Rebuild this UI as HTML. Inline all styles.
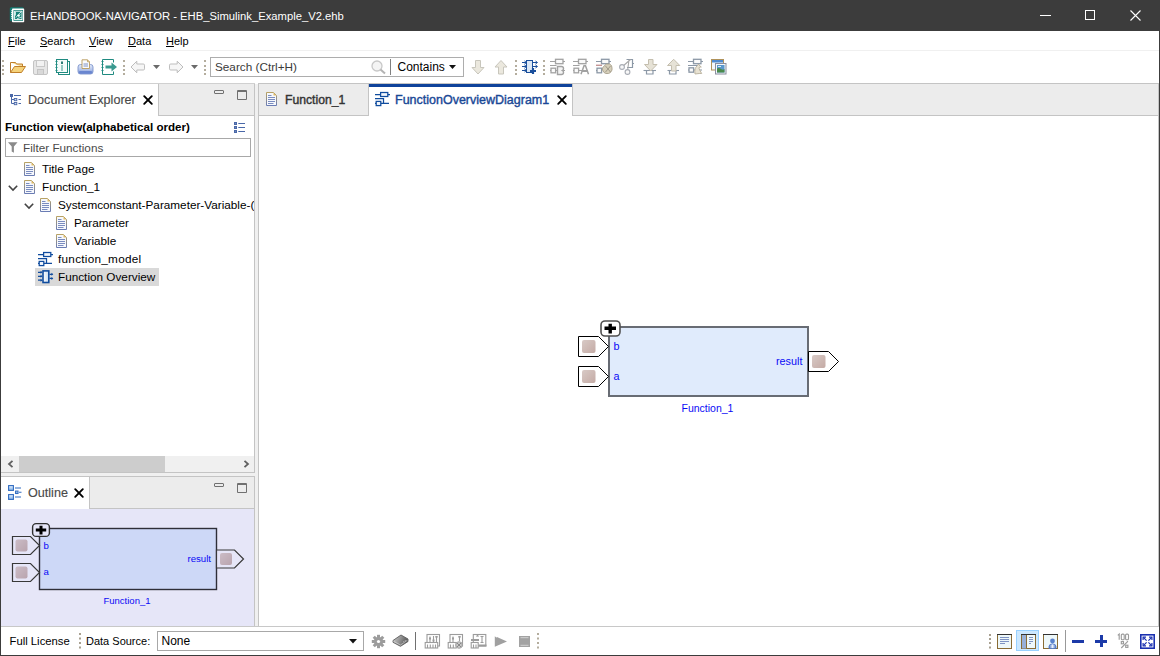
<!DOCTYPE html>
<html><head><meta charset="utf-8">
<style>
*{box-sizing:border-box;margin:0;padding:0}
html,body{width:1160px;height:656px;overflow:hidden;background:#fff;font-family:"Liberation Sans",sans-serif;font-size:12px;color:#000}
.a{position:absolute}
.t{position:absolute;white-space:nowrap;line-height:1}
svg{position:absolute;overflow:visible}
</style></head><body>
<!-- window frame -->
<div class="a" style="left:0;top:0;width:1160px;height:656px;background:#3c3c3c"></div>
<!-- title bar -->
<div class="a" style="left:1px;top:1px;width:1158px;height:30px;background:#3c3c3c"></div>
<div class="t" style="left:30px;top:11px;font-size:11.25px;color:#fff">EHANDBOOK-NAVIGATOR - EHB_Simulink_Example_V2.ehb</div>
<!-- client -->
<div class="a" style="left:1px;top:31px;width:1158px;height:624px;background:#fff"></div>

<!-- title icon -->
<svg style="left:9px;top:7px" width="16" height="16" viewBox="0 0 16 16">
<rect x="0.8" y="0.3" width="14" height="14" rx="1.5" fill="#137a72"/>
<rect x="3" y="1.6" width="12.2" height="13.6" rx="0.8" fill="#fff"/>
<rect x="4.5" y="3" width="9.5" height="10.8" fill="#157f76"/>
<rect x="5.6" y="4.2" width="7.4" height="8.4" fill="none" stroke="#fff" stroke-width="0.9"/>
<path d="M6.5 5v3.5M7 10.5q2-3 5-5.5M8 11.8q2-1 4.5-1.5M8.5 8.5l2 0.6 0.6-2" stroke="#e8fffc" stroke-width="0.8" fill="none"/>
<circle cx="9.6" cy="8.6" r="1.1" fill="#fff"/>
<path d="M2.2 3.5l1.6 1-1.6 1 1.6 1-1.6 1 1.6 1-1.6 1 1.6 1-1.6 1" fill="none" stroke="#fff" stroke-width="0.9"/>
</svg>
<!-- window controls -->
<div class="a" style="left:1040px;top:15px;width:11px;height:1px;background:#fff"></div>
<div class="a" style="left:1085px;top:10px;width:10px;height:10px;border:1px solid #fff"></div>
<svg style="left:1130px;top:10px" width="11" height="11" viewBox="0 0 11 11"><path d="M0.5 0.5L10.5 10.5M10.5 0.5L0.5 10.5" stroke="#fff" stroke-width="1.1"/></svg>

<!-- menu -->
<div class="t" style="left:8px;top:35.7px;font-size:11px"><u style="text-underline-offset:0.5px">F</u>ile</div>
<div class="t" style="left:40px;top:35.7px;font-size:11px"><u style="text-underline-offset:0.5px">S</u>earch</div>
<div class="t" style="left:89px;top:35.7px;font-size:11px"><u style="text-underline-offset:0.5px">V</u>iew</div>
<div class="t" style="left:128px;top:35.7px;font-size:11px"><u style="text-underline-offset:0.5px">D</u>ata</div>
<div class="t" style="left:166px;top:35.7px;font-size:11px"><u style="text-underline-offset:0.5px">H</u>elp</div>
<div class="a" style="left:1px;top:50px;width:1158px;height:1px;background:#f0f0f0"></div>
<!-- toolbar -->
<svg style="left:2px;top:59px" width="2" height="17"><rect x="0" y="1" width="2" height="2" fill="#b4ad9e"/><rect x="0" y="6" width="2" height="2" fill="#b4ad9e"/><rect x="0" y="10" width="2" height="2" fill="#b4ad9e"/><rect x="0" y="14" width="2" height="2" fill="#b4ad9e"/></svg>
<svg style="left:10px;top:61px" width="16" height="13" viewBox="0 0 16 13"><path d="M0.5 1.5h5l1 1.5h6v3" fill="#f6dc96" stroke="#c07f2a" stroke-width="1"/><path d="M0.5 1.5v10h11l4-6h-11l-4 6" fill="#f5d27a" stroke="#c07f2a" stroke-width="1"/></svg>
<svg style="left:33px;top:60px" width="15" height="15" viewBox="0 0 15 15"><rect x="0.5" y="0.5" width="14" height="14" rx="1.5" fill="#e6e6e6" stroke="#c4c4c4"/><rect x="3.5" y="0.5" width="8" height="6" fill="#f2f2f2" stroke="#c8c8c8"/><rect x="4.5" y="9.5" width="6" height="5" fill="#d8d8d8" stroke="#c4c4c4"/></svg>
<svg style="left:55px;top:59px" width="15" height="16" viewBox="0 0 15 16"><rect x="3.5" y="2.5" width="11" height="13" fill="#fff" stroke="#1f8a80"/><rect x="1.5" y="0.5" width="11" height="13" fill="#f4fbfa" stroke="#1f8a80"/><path d="M0.5 2.5h2M0.5 5.5h2M0.5 8.5h2M0.5 11.5h2" stroke="#1f8a80"/><rect x="6" y="2.5" width="2" height="2.5" fill="#2d7d77"/><path d="M6 7h2M6 9h2M6 11h2" stroke="#3a9a90"/></svg>
<svg style="left:77px;top:59px" width="17" height="16" viewBox="0 0 17 16"><defs><linearGradient id="prg" x1="0" y1="0" x2="0" y2="1"><stop offset="0" stop-color="#e4ecfa"/><stop offset="0.55" stop-color="#b4c4ea"/><stop offset="1" stop-color="#6f8ad4"/></linearGradient></defs><path d="M1 8q0-2.5 2.5-2.5h10q2.5 0 2.5 2.5v4.5q0 2.5-2.5 2.5h-10q-2.5 0-2.5-2.5z" fill="url(#prg)" stroke="#7d94cc" stroke-width="0.9"/><rect x="2" y="12" width="13" height="2.5" rx="1" fill="#6a86d0"/><path d="M5 9.5V0.8h5.5l2 2v6.7z" fill="#fafbfd" stroke="#b89a5c" stroke-width="0.9"/><path d="M10.5 0.8v2h2" fill="#e8d6a8" stroke="#b89a5c" stroke-width="0.8"/><path d="M6.5 5h4.5M6.5 7h4.5" stroke="#6f86c0" stroke-width="0.9"/></svg>
<svg style="left:101px;top:59px" width="17" height="16" viewBox="0 0 17 16"><path d="M12.5 3.5v-3h-11v15h11v-3" fill="none" stroke="#1f8a80"/><path d="M0.5 2.5h2M0.5 5.5h2M0.5 8.5h2M0.5 11.5h2" stroke="#1f8a80"/><path d="M4.5 6.5h6v-3l5.5 4.5-5.5 4.5v-3h-6z" fill="#3a9a90"/></svg>
<svg style="left:123px;top:59px" width="2" height="17"><rect x="0" y="1" width="2" height="2" fill="#b4ad9e"/><rect x="0" y="6" width="2" height="2" fill="#b4ad9e"/><rect x="0" y="10" width="2" height="2" fill="#b4ad9e"/><rect x="0" y="14" width="2" height="2" fill="#b4ad9e"/></svg>
<svg style="left:130px;top:60px" width="16" height="14" viewBox="0 0 16 14"><path d="M1 7L6.8 1.2V4H13.3Q14.5 4 14.5 5.2V8.8Q14.5 10 13.3 10H6.8V12.8Z" fill="#f6f6f6" stroke="#bdbdbd" stroke-linejoin="round"/></svg>
<svg style="left:153px;top:65px" width="7" height="4" viewBox="0 0 7 4"><path d="M0 0h7l-3.5 4z" fill="#6a6a6a"/></svg>
<svg style="left:168px;top:60px" width="16" height="14" viewBox="0 0 16 14"><path d="M15 7L9.2 1.2V4H2.7Q1.5 4 1.5 5.2V8.8Q1.5 10 2.7 10H9.2V12.8Z" fill="#f6f6f6" stroke="#bdbdbd" stroke-linejoin="round"/></svg>
<svg style="left:191px;top:65px" width="7" height="4" viewBox="0 0 7 4"><path d="M0 0h7l-3.5 4z" fill="#6a6a6a"/></svg>
<svg style="left:204px;top:59px" width="2" height="17"><rect x="0" y="1" width="2" height="2" fill="#b4ad9e"/><rect x="0" y="6" width="2" height="2" fill="#b4ad9e"/><rect x="0" y="10" width="2" height="2" fill="#b4ad9e"/><rect x="0" y="14" width="2" height="2" fill="#b4ad9e"/></svg>
<div class="a" style="left:210px;top:57px;width:254px;height:20px;border:1px solid #adadad;background:#fff"></div>
<div class="t" style="left:215px;top:61px;font-size:11.75px;color:#3a3a3a">Search (Ctrl+H)</div>
<svg style="left:371px;top:60px" width="16" height="15" viewBox="0 0 16 15"><circle cx="6" cy="6" r="5" fill="#f4f4f4" stroke="#c8c8c8" stroke-width="1.3"/><path d="M9.5 9.5l4.5 4" stroke="#b4b4b4" stroke-width="2"/></svg>
<div class="a" style="left:390px;top:59px;width:1px;height:16px;background:#808080"></div>
<div class="t" style="left:397.5px;top:60.8px;font-size:12px">Contains</div>
<svg style="left:449px;top:65px" width="7" height="4" viewBox="0 0 7 4"><path d="M0 0h7l-3.5 4z" fill="#111"/></svg>
<svg style="left:471px;top:59px" width="14" height="16" viewBox="0 0 14 16"><path d="M4.5 1.5h5v7h3.5l-6 6.5-6-6.5h3.5z" fill="#ebe8de" stroke="#c8c6bc" stroke-linejoin="round"/></svg>
<svg style="left:494px;top:59px" width="14" height="16" viewBox="0 0 14 16"><path d="M4.5 15h5v-7h3.5l-6-6.5-6 6.5h3.5z" fill="#ebe8de" stroke="#c8c6bc" stroke-linejoin="round"/></svg>
<svg style="left:515px;top:59px" width="2" height="17"><rect x="0" y="1" width="2" height="2" fill="#b4ad9e"/><rect x="0" y="6" width="2" height="2" fill="#b4ad9e"/><rect x="0" y="10" width="2" height="2" fill="#b4ad9e"/><rect x="0" y="14" width="2" height="2" fill="#b4ad9e"/></svg>
<svg style="left:521px;top:59px" width="17" height="16" viewBox="0 0 17 16"><rect x="5.5" y="1.5" width="6" height="12" fill="#dde9f6" stroke="#1a4f9c"/><path d="M1 3.5h4M1 7.5h4M1 11.5h4M12 3.5h4M12 7.5h4" stroke="#1a4f9c"/><path d="M3.5 2l2 1.5-2 1.5M3.5 6l2 1.5-2 1.5M3.5 10l2 1.5-2 1.5M14.5 2l2 1.5-2 1.5M14.5 6l2 1.5-2 1.5" fill="none" stroke="#1a4f9c"/><path d="M9 12h6M12 9v6" stroke="#1a4f9c" stroke-width="2.2"/></svg>
<svg style="left:543px;top:59px" width="2" height="17"><rect x="0" y="1" width="2" height="2" fill="#b4ad9e"/><rect x="0" y="6" width="2" height="2" fill="#b4ad9e"/><rect x="0" y="10" width="2" height="2" fill="#b4ad9e"/><rect x="0" y="14" width="2" height="2" fill="#b4ad9e"/></svg>
<svg style="left:550px;top:58px" width="17" height="17" viewBox="0 0 17 17"><path d="M0 3.5H15M0 7.5H6.5M0 12.5H15" stroke="#a2a2a2" stroke-width="1.1"/><rect x="5.5" y="1.3" width="7.5" height="4.4" fill="#fafafa" stroke="#a2a2a2" stroke-width="1.3"/><rect x="1" y="10.2" width="4.6" height="4.6" fill="#fafafa" stroke="#a2a2a2" stroke-width="1.3"/><path d="M7.5 8.5h4q2 0 2 2v0.5q0 1-1 1.5 1 .5 1 1.5v.5q0 2-2 2h-4z" fill="#f4f4f4" stroke="#a2a2a2" stroke-width="1.4"/></svg>
<svg style="left:573px;top:58px" width="17" height="17" viewBox="0 0 17 17"><path d="M0 3.5H15M0 7.5H6.5M0 12.5H15" stroke="#a2a2a2" stroke-width="1.1"/><rect x="5.5" y="1.3" width="7.5" height="4.4" fill="#fafafa" stroke="#a2a2a2" stroke-width="1.3"/><rect x="1" y="10.2" width="4.6" height="4.6" fill="#fafafa" stroke="#a2a2a2" stroke-width="1.3"/><path d="M8 16.3l3-8.5h1.5l3 8.5M9.5 13.3h4.5" fill="none" stroke="#a2a2a2" stroke-width="1.5"/></svg>
<svg style="left:596px;top:58px" width="17" height="17" viewBox="0 0 17 17"><path d="M0 3.5H15M0 12.5H5" stroke="#8c98a6" stroke-width="1.1"/><rect x="5.5" y="1.3" width="7.5" height="4.4" fill="#fafafa" stroke="#8c98a6" stroke-width="1.3"/><rect x="1" y="10.2" width="4.6" height="4.6" fill="#fafafa" stroke="#8c98a6" stroke-width="1.3"/><path d="M0 7.3H6" stroke="#c49494" stroke-width="1.4"/><path d="M8.5 7.5l2-1.5h3l2 1.5 .5 2.5v2l-1.5 2.5-2 1h-2.5l-2-1-1.5-2.5v-2z" fill="#d6cfba" stroke="#a8a08c" stroke-width="0.9"/><path d="M9.5 8l5 6M14.5 8l-5 6" stroke="#9a9484" stroke-width="0.9"/></svg>
<svg style="left:619px;top:58px" width="16" height="17" viewBox="0 0 16 17"><path d="M7.5 1.5H13.5V9.5H8" fill="none" stroke="#8c98a6" stroke-width="1.2"/><path d="M0 9.5h15" stroke="#8c98a6" stroke-width="0"/><path d="M3.5 8.5L11.5 1.5M8.5 13L10 2" stroke="#a8a8a8" stroke-width="1.1"/><path d="M13 5.5h2" stroke="#8c98a6"/><circle cx="3" cy="9" r="2.4" fill="#f8f8f8" stroke="#a8acb4" stroke-width="1.1"/><circle cx="8.5" cy="14" r="2.4" fill="#f8f8f8" stroke="#a8acb4" stroke-width="1.1"/></svg>
<svg style="left:643px;top:58px" width="15" height="17" viewBox="0 0 15 17"><path d="M0.5 12.5H13" stroke="#8c98a6" stroke-width="1.1"/><path d="M3.5 12.5v3.5h6.5v-3.5" fill="none" stroke="#8c98a6" stroke-width="1.2"/><path d="M5.5 1.5h4.5v5h4l-6.3 6.5-6.2-6.5h4z" fill="#e6e2d6" stroke="#c4beae" stroke-linejoin="round"/></svg>
<svg style="left:667px;top:58px" width="15" height="17" viewBox="0 0 15 17"><path d="M0.5 12.5H12" stroke="#8c98a6" stroke-width="1.1"/><path d="M2.5 12.5v3.5h6.5v-3.5" fill="none" stroke="#8c98a6" stroke-width="1.2"/><path d="M4.5 13h4.5v-5.5h3.8l-6.1-6.2-6.2 6.2h4z" fill="#e6e2d6" stroke="#c4beae" stroke-linejoin="round"/></svg>
<svg style="left:688px;top:58px" width="16" height="17" viewBox="0 0 16 17"><path d="M0 3.5H15M0 7.5H12M0 12H14" stroke="#8c98a6" stroke-width="1.1"/><rect x="5.5" y="1.3" width="7.5" height="4.4" fill="#fafafa" stroke="#8c98a6" stroke-width="1.3"/><rect x="1" y="9.8" width="4.6" height="4.4" fill="#fafafa" stroke="#8c98a6" stroke-width="1.3"/><path d="M7 16q-1-6 2.5-8.5l1-1.5 1 1.5 1.8 1.5h-1.6q-1.5 .5 0 3l2 3.5h-2.5z" fill="#e8e2d2" stroke="#b8b09c" stroke-width="0.9"/></svg>
<svg style="left:710px;top:58px" width="17" height="17" viewBox="0 0 17 17"><rect x="1.5" y="1.5" width="12" height="10.5" fill="#f4f8fc" stroke="#b0925a"/><rect x="2" y="2" width="11" height="2.5" fill="#4f8ad0"/><rect x="5.5" y="5.5" width="10.5" height="10.5" fill="#f4f8fc" stroke="#8a8e9e"/><rect x="7" y="7" width="7.5" height="7.5" fill="#5b98cc"/><path d="M7 14.5v-4q2-1 4 .5t3.5 0v3.5z" fill="#4a8a4c"/><path d="M8 8.5h3" stroke="#fff" stroke-width="0.8"/></svg>
<!-- toolbar bottom line -->
<div class="a" style="left:1px;top:83px;width:1158px;height:1px;background:#d0d0d0"></div>

<!-- left panel area bg -->
<div class="a" style="left:1px;top:84px;width:257px;height:542px;background:#f0f0f0"></div>
<!-- doc explorer panel -->
<div class="a" style="left:1px;top:84px;width:254px;height:389px;background:#fff;border-right:1px solid #c4c4c4;border-bottom:1px solid #c4c4c4"></div>
<div class="a" style="left:158px;top:84px;width:96px;height:32px;background:#ececec;border-left:1px solid #c4c4c4;border-bottom:1px solid #c4c4c4"></div>
<svg style="left:10px;top:94px" width="12" height="12" viewBox="0 0 12 12"><rect x="0" y="0" width="3" height="3" fill="#4a68a8"/><path d="M4 1.5h7M1.5 3v6.5M1.5 5.5h2.5M1.5 9.5h2.5M8.5 5.5h2.5M8.5 9.5h2.5" stroke="#4a68a8" fill="none"/><rect x="4.3" y="4.5" width="2.5" height="2.2" fill="#d8e0f0" stroke="#4a68a8" stroke-width="0.9"/><rect x="4.3" y="8.5" width="2.5" height="2.2" fill="#d8e0f0" stroke="#4a68a8" stroke-width="0.9"/></svg>
<div class="t" style="left:28px;top:94.4px;font-size:12.6px;color:#4a4a4a;-webkit-text-stroke:0.15px #4a4a4a">Document Explorer</div>
<svg style="left:143px;top:95px" width="10" height="10" viewBox="0 0 10 10"><path d="M1.2 1.2L8.8 8.8M8.8 1.2L1.2 8.8" stroke="#000" stroke-width="1.9" stroke-linecap="round"/></svg>
<div class="a" style="left:214px;top:90px;width:10px;height:4px;border:1px solid #707070;border-radius:1px"></div><div class="a" style="left:237px;top:90px;width:10px;height:10px;border:1px solid #707070;border-top-width:2px;border-radius:1px"></div>
<div class="t" style="left:5px;top:121.2px;font-size:11.6px;font-weight:bold">Function view(alphabetical order)</div>
<svg style="left:234px;top:122px" width="12" height="12" viewBox="0 0 12 12"><g fill="#4a68a8"><rect x="0" y="0" width="3" height="3"/><rect x="0" y="4" width="3" height="3"/><rect x="0" y="8" width="3" height="3"/></g><g fill="#b8c8e4"><rect x="1.2" y="1.2" width="0.6" height="0.6"/><rect x="1.2" y="5.2" width="0.6" height="0.6"/><rect x="1.2" y="9.2" width="0.6" height="0.6"/></g><path d="M4.3 1.5h6.7M4.3 5.5h6.7M4.3 9.5h6.7" stroke="#4a68a8" stroke-width="1.1"/></svg>
<div class="a" style="left:5px;top:138px;width:246px;height:19px;border:1px solid #a8a8a8;background:#fff"></div>
<svg style="left:7.5px;top:142px" width="10" height="11" viewBox="0 0 10 11"><path d="M0 0.3h9.5l-3.6 4.2v6.3l-2.2-1.4v-4.9z" fill="#8a8a8a"/></svg>
<div class="t" style="left:23px;top:142px;font-size:11.75px;color:#4a4a4a">Filter Functions</div>
<svg style="left:24px;top:162px" width="11" height="14" viewBox="0 0 11 14"><defs><linearGradient id="dg1" x1="0" y1="0" x2="0" y2="1"><stop offset="0" stop-color="#b8a264"/><stop offset="1" stop-color="#6a7cb4"/></linearGradient></defs><path d="M0.5 0.5H7.5L10.5 3.5V13.5H0.5Z" fill="#f6f8fc" stroke="url(#dg1)"/><path d="M7.5 0.8V3.5H10.2Z" fill="#e2ba62"/><path d="M2 3.5H5.5M2 5.5H9M2 7.5H9M2 9.5H9M2 11.5H7.5" stroke="#7a8cc0"/></svg>
<div class="t" style="left:42px;top:162.5px;font-size:11.75px">Title Page</div>
<svg style="left:7.5px;top:185px" width="10" height="6" viewBox="0 0 10 6"><path d="M0.8 0.8L5 5 9.2 0.8" fill="none" stroke="#444" stroke-width="1.6"/></svg>
<svg style="left:24px;top:180px" width="11" height="14" viewBox="0 0 11 14"><defs><linearGradient id="dg2" x1="0" y1="0" x2="0" y2="1"><stop offset="0" stop-color="#b8a264"/><stop offset="1" stop-color="#6a7cb4"/></linearGradient></defs><path d="M0.5 0.5H7.5L10.5 3.5V13.5H0.5Z" fill="#f6f8fc" stroke="url(#dg2)"/><path d="M7.5 0.8V3.5H10.2Z" fill="#e2ba62"/><path d="M2 3.5H5.5M2 5.5H9M2 7.5H9M2 9.5H9M2 11.5H7.5" stroke="#7a8cc0"/></svg>
<div class="t" style="left:42px;top:180.5px;font-size:11.75px">Function_1</div>
<svg style="left:23.5px;top:203px" width="10" height="6" viewBox="0 0 10 6"><path d="M0.8 0.8L5 5 9.2 0.8" fill="none" stroke="#444" stroke-width="1.6"/></svg>
<svg style="left:40px;top:198px" width="11" height="14" viewBox="0 0 11 14"><defs><linearGradient id="dg3" x1="0" y1="0" x2="0" y2="1"><stop offset="0" stop-color="#b8a264"/><stop offset="1" stop-color="#6a7cb4"/></linearGradient></defs><path d="M0.5 0.5H7.5L10.5 3.5V13.5H0.5Z" fill="#f6f8fc" stroke="url(#dg3)"/><path d="M7.5 0.8V3.5H10.2Z" fill="#e2ba62"/><path d="M2 3.5H5.5M2 5.5H9M2 7.5H9M2 9.5H9M2 11.5H7.5" stroke="#7a8cc0"/></svg>
<div class="a" style="left:58px;top:194px;width:196px;height:18px;overflow:hidden"><div class="t" style="left:0;top:4.5px;font-size:11.75px">Systemconstant-Parameter-Variable-(</div></div>
<svg style="left:56px;top:216px" width="11" height="14" viewBox="0 0 11 14"><defs><linearGradient id="dg4" x1="0" y1="0" x2="0" y2="1"><stop offset="0" stop-color="#b8a264"/><stop offset="1" stop-color="#6a7cb4"/></linearGradient></defs><path d="M0.5 0.5H7.5L10.5 3.5V13.5H0.5Z" fill="#f6f8fc" stroke="url(#dg4)"/><path d="M7.5 0.8V3.5H10.2Z" fill="#e2ba62"/><path d="M2 3.5H5.5M2 5.5H9M2 7.5H9M2 9.5H9M2 11.5H7.5" stroke="#7a8cc0"/></svg>
<div class="t" style="left:74px;top:216.5px;font-size:11.75px">Parameter</div>
<svg style="left:56px;top:234px" width="11" height="14" viewBox="0 0 11 14"><defs><linearGradient id="dg5" x1="0" y1="0" x2="0" y2="1"><stop offset="0" stop-color="#b8a264"/><stop offset="1" stop-color="#6a7cb4"/></linearGradient></defs><path d="M0.5 0.5H7.5L10.5 3.5V13.5H0.5Z" fill="#f6f8fc" stroke="url(#dg5)"/><path d="M7.5 0.8V3.5H10.2Z" fill="#e2ba62"/><path d="M2 3.5H5.5M2 5.5H9M2 7.5H9M2 9.5H9M2 11.5H7.5" stroke="#7a8cc0"/></svg>
<div class="t" style="left:74px;top:234.5px;font-size:11.75px">Variable</div>
<svg style="left:38px;top:251px" width="16" height="16" viewBox="0 0 16 16"><g fill="none" stroke="#104c9e" stroke-width="1.25"><path d="M0 3.5H15M0 7.6H8.5V12.4M0 12.4H14"/><rect x="5.6" y="1.5" width="7.2" height="4" fill="#f2f6fc"/><rect x="1.2" y="10.4" width="4.6" height="4.2" fill="#f2f6fc"/></g></svg>
<div class="t" style="left:58px;top:252.5px;font-size:11.75px;letter-spacing:0.27px">function_model</div>
<div class="a" style="left:35px;top:268px;width:124px;height:18px;background:#d9d9d9"></div>
<svg style="left:38px;top:269px" width="16" height="16" viewBox="0 0 16 16"><defs><linearGradient id="fog" x1="0" x2="1"><stop offset="0" stop-color="#ffffff"/><stop offset="1" stop-color="#c8dcf0"/></linearGradient></defs><rect x="5" y="1.9" width="5.8" height="11.6" fill="url(#fog)" stroke="#104c9e" stroke-width="1.6"/><path d="M0 3.3h3.5M0 7.3h3.5M0 11.2h3.5M11.5 5.3h3M11.5 9.4h3" stroke="#104c9e" stroke-width="1.3"/><path d="M2.6 1.8l1.9 1.5-1.9 1.5zM2.6 5.8l1.9 1.5-1.9 1.5zM2.6 9.7l1.9 1.5-1.9 1.5zM13.4 3.8l1.9 1.5-1.9 1.5zM13.4 7.9l1.9 1.5-1.9 1.5z" fill="#104c9e"/></svg>
<div class="t" style="left:58px;top:270.5px;font-size:11.75px">Function Overview</div>
<div class="a" style="left:255px;top:116px;width:0px;height:1px"></div>
<!-- h scrollbar -->
<div class="a" style="left:1px;top:456px;width:253px;height:16px;background:#f0f0f0"></div>
<div class="a" style="left:19px;top:456px;width:146px;height:16px;background:#cdcdcd"></div>
<svg style="left:7px;top:460px" width="7" height="8" viewBox="0 0 7 8"><path d="M5.5 0.8L2 4l3.5 3.2" fill="none" stroke="#606060" stroke-width="1.8"/></svg>
<svg style="left:243px;top:460px" width="7" height="8" viewBox="0 0 7 8"><path d="M1.5 0.8L5 4 1.5 7.2" fill="none" stroke="#606060" stroke-width="1.8"/></svg>
<!-- outline panel -->
<div class="a" style="left:1px;top:476px;width:254px;height:150px;background:#e6e6f8;border-right:1px solid #c4c4c4;border-top:1px solid #c4c4c4"></div>
<div class="a" style="left:1px;top:477px;width:88px;height:32px;background:#fff"></div>
<div class="a" style="left:89px;top:477px;width:165px;height:32px;background:#ececec;border-left:1px solid #c4c4c4;border-bottom:1px solid #c4c4c4"></div>
<svg style="left:8px;top:485px" width="14" height="15" viewBox="0 0 14 15"><defs><linearGradient id="olg" x1="0" y1="0" x2="0" y2="1"><stop offset="0" stop-color="#f0f6fe"/><stop offset="1" stop-color="#7aaee8"/></linearGradient></defs><g fill="url(#olg)" stroke="#2f6ac0" stroke-width="1.1"><rect x="0.6" y="0.6" width="4.8" height="4.8"/><rect x="0.6" y="9.6" width="4.8" height="4.8"/><rect x="7.6" y="6.1" width="2.4" height="2.4"/></g><path d="M7 3h6M11 7.3h2.5M7 12h6" stroke="#2f6ac0" stroke-width="1.1"/></svg>
<div class="t" style="left:28px;top:487.2px;font-size:12.6px;color:#4a4a4a;-webkit-text-stroke:0.15px #4a4a4a">Outline</div>
<svg style="left:74px;top:488px" width="10" height="10" viewBox="0 0 10 10"><path d="M1.2 1.2L8.8 8.8M8.8 1.2L1.2 8.8" stroke="#000" stroke-width="1.9" stroke-linecap="round"/></svg>
<div class="a" style="left:214px;top:483px;width:10px;height:4px;border:1px solid #707070;border-radius:1px"></div><div class="a" style="left:237px;top:483px;width:10px;height:10px;border:1px solid #707070;border-top-width:2px;border-radius:1px"></div>
<!-- editor -->
<div class="a" style="left:258px;top:83px;width:901px;height:543px;background:#fff;border-left:1px solid #c4c4c4;border-top:1px solid #c4c4c4;border-right:1px solid #c4c4c4"></div>
<div class="a" style="left:259px;top:84px;width:899px;height:32px;background:#ececec;border-bottom:1px solid #c4c4c4"></div>
<div class="a" style="left:259px;top:84px;width:110px;height:32px;background:#ececec;border-right:1px solid #c4c4c4;border-bottom:1px solid #c4c4c4"></div>
<svg style="left:266px;top:92px" width="11" height="14" viewBox="0 0 11 14"><defs><linearGradient id="dg6" x1="0" y1="0" x2="0" y2="1"><stop offset="0" stop-color="#b8a264"/><stop offset="1" stop-color="#6a7cb4"/></linearGradient></defs><path d="M0.5 0.5H7.5L10.5 3.5V13.5H0.5Z" fill="#f6f8fc" stroke="url(#dg6)"/><path d="M7.5 0.8V3.5H10.2Z" fill="#e2ba62"/><path d="M2 3.5H5.5M2 5.5H9M2 7.5H9M2 9.5H9M2 11.5H7.5" stroke="#7a8cc0"/></svg>
<div class="t" style="left:285px;top:94.4px;font-size:12.2px;color:#333;-webkit-text-stroke:0.4px #333">Function_1</div>
<div class="a" style="left:369px;top:84px;width:204px;height:32px;background:#fff;border-right:1px solid #c4c4c4"></div><div class="a" style="left:369px;top:116px;width:203px;height:1px;background:#fff"></div>
<div class="a" style="left:369px;top:84px;width:203px;height:3px;background:#0f429a"></div>
<svg style="left:375px;top:91px" width="16" height="16" viewBox="0 0 16 16"><g fill="none" stroke="#104c9e" stroke-width="1.25"><path d="M0 3.5H15M0 7.6H8.5V12.4M0 12.4H14"/><rect x="5.6" y="1.5" width="7.2" height="4" fill="#f2f6fc"/><rect x="1.2" y="10.4" width="4.6" height="4.2" fill="#f2f6fc"/></g></svg>
<div class="t" style="left:395px;top:94.4px;font-size:12.5px;color:#1a4896;-webkit-text-stroke:0.4px #1a4896">FunctionOverviewDiagram1</div>
<svg style="left:556.5px;top:95px" width="10" height="10" viewBox="0 0 10 10"><path d="M1.2 1.2L8.8 8.8M8.8 1.2L1.2 8.8" stroke="#000" stroke-width="1.9" stroke-linecap="round"/></svg>
<!-- main diagram -->
<svg style="left:0;top:0" width="1160" height="656" viewBox="0 0 1160 656">
<defs>
<linearGradient id="pg" x1="0" y1="0" x2="1" y2="1"><stop offset="0" stop-color="#d8cac6"/><stop offset="1" stop-color="#c4aaa4"/></linearGradient>
<filter id="bl" x="-30%" y="-30%" width="160%" height="160%"><feGaussianBlur stdDeviation="0.6"/></filter>
</defs>
<rect x="609" y="327" width="199" height="69" fill="#e0ebfc" stroke="#686c74" stroke-width="2"/>
<rect x="601" y="321" width="19" height="15" rx="4" fill="#fff" stroke="#505050" stroke-width="1.6"/>
<path d="M604.5 328.2h11.5M610.2 323.8v9.6" stroke="#000" stroke-width="3.4"/>
<path d="M578.5 336.5H598.5L608.5 346.5L598.5 356.5H578.5Z" fill="#fff" stroke="#000" stroke-width="1"/><rect x="582" y="340" width="13.5" height="13" rx="2" fill="url(#pg)" filter="url(#bl)"/>
<path d="M578.5 366.5H598.5L608.5 376.5L598.5 386.5H578.5Z" fill="#fff" stroke="#000" stroke-width="1"/><rect x="582" y="370" width="13.5" height="13" rx="2" fill="url(#pg)" filter="url(#bl)"/>
<path d="M808.5 351.5H828.5L838.5 361.5L828.5 371.5H808.5Z" fill="#fff" stroke="#000" stroke-width="1"/><rect x="812" y="355" width="13.5" height="13" rx="2" fill="url(#pg)" filter="url(#bl)"/>
</svg>
<div class="t" style="left:613.5px;top:341px;font-size:10.8px;color:#0a0af6">b</div>
<div class="t" style="left:613.5px;top:371px;font-size:10.8px;color:#0a0af6">a</div>
<div class="t" style="left:776px;top:356px;font-size:10.8px;color:#0a0af6">result</div>
<div class="t" style="left:681.5px;top:403.1px;font-size:10.5px;color:#0a0af6">Function_1</div>
<div class="a" style="left:255px;top:83px;width:3px;height:1px;background:#fff"></div>
<!-- outline diagram -->
<svg style="left:0;top:0" width="1160" height="656" viewBox="0 0 1160 656">
<defs>
<linearGradient id="pg2" x1="0" y1="0" x2="1" y2="1"><stop offset="0" stop-color="#cbbcc6"/><stop offset="1" stop-color="#b9a4ae"/></linearGradient>
</defs>
<rect x="39.5" y="528.5" width="177" height="61" fill="#cdd8f7" stroke="#2e2e38" stroke-width="1.4"/>
<rect x="32.6" y="523.6" width="16.8" height="12.8" rx="3.5" fill="#e6e6f8" stroke="#303030" stroke-width="1.4"/>
<path d="M35.8 530h10.4M41 525.8v8.6" stroke="#000" stroke-width="3"/>
<path d="M12.5 536.5H30.5L39.5 545.5L30.5 554.5H12.5Z" fill="#e6e6f8" stroke="#383838" stroke-width="1.2"/>
<path d="M12.5 563.5H30.5L39.5 572.5L30.5 581.5H12.5Z" fill="#e6e6f8" stroke="#383838" stroke-width="1.2"/>
<path d="M216.5 550H234.5L243.5 559L234.5 568H216.5Z" fill="#e6e6f8" stroke="#383838" stroke-width="1.2"/>
<rect x="15.5" y="539.5" width="12" height="12" rx="2" fill="url(#pg2)" filter="url(#bl)"/>
<rect x="15.5" y="566.5" width="12" height="12" rx="2" fill="url(#pg2)" filter="url(#bl)"/>
<rect x="220" y="553" width="12" height="12" rx="2" fill="url(#pg2)" filter="url(#bl)"/>
</svg>
<div class="t" style="left:43.5px;top:541px;font-size:9.6px;color:#0a0af6">b</div>
<div class="t" style="left:43.5px;top:567px;font-size:9.6px;color:#0a0af6">a</div>
<div class="t" style="left:187.5px;top:554px;font-size:9.6px;color:#0a0af6">result</div>
<div class="t" style="left:103.5px;top:596px;font-size:9.5px;color:#0a0af6">Function_1</div>
<!-- status bar -->
<div class="a" style="left:1px;top:626px;width:1158px;height:1px;background:#c8c8c8"></div>
<div class="t" style="left:9.5px;top:635.7px;font-size:11.3px">Full License</div>
<svg style="left:79px;top:632px" width="2" height="18"><rect y="1" width="2" height="2" fill="#a8a090"/><rect y="5.5" width="2" height="2" fill="#a8a090"/><rect y="10" width="2" height="2" fill="#a8a090"/><rect y="14.5" width="2" height="2" fill="#a8a090"/></svg>
<div class="t" style="left:86px;top:635.7px;font-size:11px">Data Source:</div>
<div class="a" style="left:157px;top:631px;width:207px;height:20px;border:1px solid #a8a8a8;background:#fff"></div>
<div class="t" style="left:161.5px;top:634.8px;font-size:12px">None</div>
<svg style="left:349px;top:639px" width="8" height="5"><path d="M0 0h8l-4 4.5z" fill="#111"/></svg>
<svg style="left:372px;top:635px" width="13" height="13" viewBox="0 0 13 13"><g fill="#9c9c9c"><circle cx="6.5" cy="6.5" r="4.6"/><rect x="10.20" y="5.00" width="3" height="3" transform="rotate(0 11.70 6.50)"/><rect x="8.68" y="8.68" width="3" height="3" transform="rotate(45 10.18 10.18)"/><rect x="5.00" y="10.20" width="3" height="3" transform="rotate(90 6.50 11.70)"/><rect x="1.32" y="8.68" width="3" height="3" transform="rotate(135 2.82 10.18)"/><rect x="-0.20" y="5.00" width="3" height="3" transform="rotate(180 1.30 6.50)"/><rect x="1.32" y="1.32" width="3" height="3" transform="rotate(225 2.82 2.82)"/><rect x="5.00" y="-0.20" width="3" height="3" transform="rotate(270 6.50 1.30)"/><rect x="8.68" y="1.32" width="3" height="3" transform="rotate(315 10.18 2.82)"/></g><circle cx="6.5" cy="6.5" r="1.6" fill="#fff"/></svg>
<svg style="left:392px;top:634px" width="17" height="13" viewBox="0 0 17 13"><defs><linearGradient id="dg" x1="0" y1="0" x2="1" y2="0.3"><stop offset="0" stop-color="#d0d0d0"/><stop offset="0.6" stop-color="#8c8c8c"/><stop offset="1" stop-color="#5a5a5a"/></linearGradient></defs><path d="M1 6.5L9 1l7 4v2.5L8.5 12.3 1 8.3z" fill="url(#dg)" stroke="#5c5c5c" stroke-width="0.9" stroke-linejoin="round"/><path d="M1.5 7.3L8.5 11l7-4.8" fill="none" stroke="#e0e0e0" stroke-width="0.6"/><path d="M11 8l1.5-1M13 7l1-0.7" stroke="#c0c0c0" stroke-width="0.7"/></svg>
<div class="a" style="left:415px;top:632px;width:1px;height:18px;background:#707070"></div>
<svg style="left:424px;top:633px" width="17" height="16" viewBox="0 0 17 16"><g fill="#fff" stroke="#9c9c9c" stroke-width="1.1"><rect x="3" y="1.5" width="12.5" height="11.5"/><rect x="1.2" y="9.5" width="12.5" height="5.5"/></g><g stroke="#9c9c9c" stroke-width="1.1" fill="none"><path d="M6 3.5v5.5M9.5 3v6M12.5 3v6M3.5 11.5v3.5M6.3 11.5v3.5M9 11.5v3.5M11.5 11.5v3.5"/></g><g fill="#9c9c9c"><rect x="5" y="4.5" width="2" height="2"/><rect x="8.5" y="6.5" width="2" height="2"/><rect x="11.3" y="3" width="2.4" height="1.6"/></g></svg>
<svg style="left:447px;top:633px" width="17" height="16" viewBox="0 0 17 16"><g fill="#fff" stroke="#9c9c9c" stroke-width="1.1"><rect x="3" y="1.5" width="12.5" height="11.5"/><rect x="1.2" y="9.5" width="8" height="5.5"/></g><g stroke="#9c9c9c" stroke-width="1.1" fill="none"><path d="M6 3.5v5.5M12.5 3v5M3.5 11.5v3.5M6.3 11.5v3.5"/></g><g fill="#9c9c9c"><rect x="5" y="4.5" width="2" height="2"/><rect x="11.3" y="3" width="2.4" height="1.6"/></g><circle cx="12" cy="12" r="3.3" fill="#c8c8c8" stroke="#9c9c9c" stroke-width="0.9"/><path d="M10 10l4 4M14 10l-4 4" stroke="#888" stroke-width="1"/></svg>
<svg style="left:470px;top:633px" width="17" height="16" viewBox="0 0 17 16"><g fill="#fff" stroke="#9c9c9c" stroke-width="1.1"><rect x="3.3" y="1.5" width="12.5" height="11.5"/><rect x="1.2" y="9.5" width="7" height="5.5"/></g><path d="M1 7h8M8.5 12.5h8" stroke="#9c9c9c" stroke-width="2"/><g stroke="#9c9c9c" stroke-width="1.1" fill="none"><path d="M12 3.5v6M10.5 3.5h3M10.5 9.5h3M3.5 11.5v3.5M6 11.5v3.5M6.5 3.5l1-1 1 1"/></g></svg>
<svg style="left:494px;top:636px" width="14" height="11" viewBox="0 0 14 11"><path d="M0.8 0.3L2.3 1.4 3.5 1v0.2L13 5.5 0.8 10.8z" fill="#a0a0a0"/></svg>
<svg style="left:519px;top:636px" width="11" height="11" viewBox="0 0 11 11"><rect x="0" y="0" width="11" height="11" fill="#a2a2a2"/><path d="M1.5 1.7h8M1.5 9.3h8" stroke="#dedede" stroke-width="0.8"/></svg>
<svg style="left:537px;top:632px" width="2" height="18"><rect y="1" width="2" height="2" fill="#b4ad9e"/><rect y="5.5" width="2" height="2" fill="#b4ad9e"/><rect y="10" width="2" height="2" fill="#b4ad9e"/><rect y="14.5" width="2" height="2" fill="#b4ad9e"/></svg><svg style="left:989px;top:633px" width="2" height="17"><rect y="1" width="2" height="2" fill="#a8a090"/><rect y="5" width="2" height="2" fill="#a8a090"/><rect y="9" width="2" height="2" fill="#a8a090"/><rect y="13.5" width="2" height="2" fill="#a8a090"/></svg>
<svg style="left:997px;top:634px" width="15" height="15" viewBox="0 0 15 15"><rect x="0.5" y="0.5" width="14" height="14" fill="#eef8fa" stroke="#8a6c34"/><path d="M0 0.5h15" stroke="#333"/><path d="M3 3.5h9M3 5.5h9M3 7.5h9M3 9.5h5" stroke="#7f94c4"/></svg>
<div class="a" style="left:1016px;top:630px;width:23px;height:21px;background:#cce8ff;border:1px solid #99d1ff"></div>
<svg style="left:1021px;top:634px" width="15" height="15" viewBox="0 0 15 15"><rect x="0.5" y="0.5" width="14" height="14" fill="#eef8fa" stroke="#8a6c34"/><rect x="1" y="1" width="4.5" height="13.5" fill="#98b0d8"/><path d="M5.5 0.5v14" stroke="#8a6c34"/><path d="M0 0.5h15" stroke="#333"/><path d="M8 3.5h4M8 5.5h4M8 7.5h4M8 9.5h2" stroke="#7f94c4"/></svg>
<svg style="left:1043px;top:634px" width="15" height="15" viewBox="0 0 15 15"><defs><linearGradient id="psg" x1="0" x2="1"><stop offset="0" stop-color="#4a72c4"/><stop offset="0.5" stop-color="#e8f0fa"/><stop offset="1" stop-color="#4a72c4"/></linearGradient></defs><rect x="0.5" y="0.5" width="14" height="14" fill="#eef8fa" stroke="#8a6c34"/><path d="M0 0.5h15" stroke="#333"/><circle cx="9.5" cy="7" r="2.4" fill="#5a82cc"/><path d="M6 14.5v-2q0-2.6 3.5-2.6t3.5 2.6v2z" fill="url(#psg)" stroke="#4a72c4" stroke-width="0.8"/></svg>
<div class="a" style="left:1065px;top:630px;width:1px;height:22px;background:#999"></div>
<div class="a" style="left:1072px;top:640px;width:12px;height:3px;background:#1c3aa8"></div>
<div class="a" style="left:1095px;top:640px;width:12px;height:3px;background:#1c3aa8"></div>
<div class="a" style="left:1099.5px;top:635px;width:3px;height:12px;background:#1c3aa8"></div>
<svg style="left:1117px;top:633px" width="13" height="16" viewBox="0 0 13 16"><g fill="none" stroke="#9a9a9a" stroke-width="1.1"><path d="M0.8 2.3L2.2 1V6.8"/><rect x="4.3" y="1.1" width="2.9" height="5.6" rx="1"/><rect x="8.6" y="1.1" width="2.9" height="5.6" rx="1"/><rect x="4.3" y="8.6" width="2.2" height="2.2"/><rect x="8.7" y="12.2" width="2.2" height="2.2"/><path d="M4.3 15L11 8.2"/></g></svg>
<svg style="left:1140px;top:634px" width="15" height="15" viewBox="0 0 15 15"><rect x="0.8" y="0.8" width="13.4" height="13.4" fill="#fff" stroke="#1a30b0" stroke-width="1.6"/><g stroke="#1a30b0" stroke-width="1.2" fill="none"><path d="M3.6 3.6L6.6 6.6M11.4 3.6L8.4 6.6M3.6 11.4L6.6 8.4M11.4 11.4L8.4 8.4"/><path d="M3.1 6V3.1H6M9 3.1H11.9V6M3.1 9V11.9H6M9 11.9H11.9V9"/></g></svg>
</body></html>
